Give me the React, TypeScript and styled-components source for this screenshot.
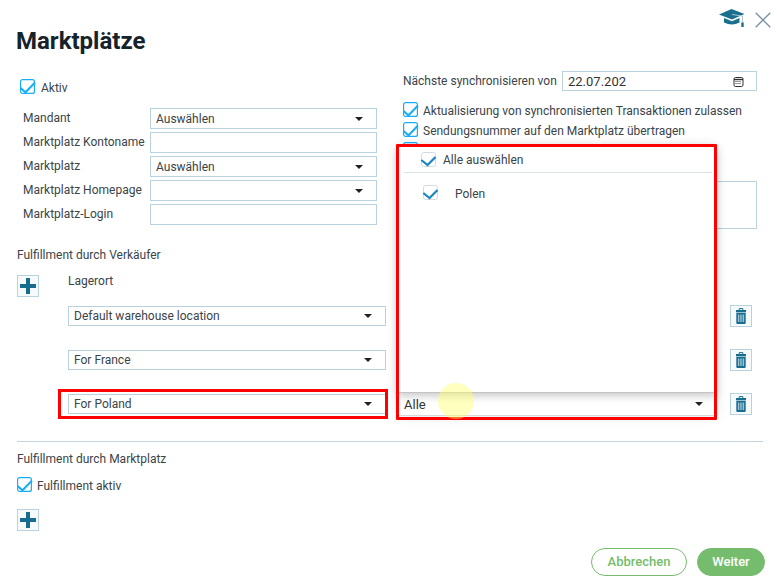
import React from 'react';
import styled, { createGlobalStyle } from 'styled-components';

const Global = createGlobalStyle`
  html, body { margin: 0; padding: 0; background: #fff; }
  * { box-sizing: border-box; }
  body { font-family: Roboto, "Liberation Sans", sans-serif; font-size: 12px; color: #3a4449; }
`;

const Page = styled.div`
  position: relative;
  width: 777px;
  height: 586px;
  overflow: hidden;
  background: #fff;
`;
const TopBar = styled.div`
  height: 28px;
  padding: 9px 6px 0 0;
  display: flex;
  justify-content: flex-end;
  gap: 10px;
`;
const Title = styled.h1`
  margin: 0 0 16px 16px;
  height: 27px;
  font-size: 24px;
  line-height: 27px;
  font-weight: 700;
  color: #16232a;
`;
const Columns = styled.div`
  display: grid;
  grid-template-columns: 403px 354px;
  height: 177px;
`;
const LeftCol = styled.div`
  padding: 8px 0 0 20px;
`;
const RightCol = styled.div`
  display: flex;
  flex-direction: column;
`;
const BoxLabel = styled.label<{ $gap?: number }>`
  display: flex;
  align-items: center;
  gap: ${p => p.$gap ?? 5}px;
  height: 15px;
  line-height: 15px;
  white-space: nowrap;
`;
const BoxText = styled.span<{ $shift?: number }>`
  padding-top: ${p => p.$shift ?? 4}px;
`;
const BoxSvg = styled.svg`
  display: block;
  flex: none;
  overflow: visible;
`;
const FormList = styled.div`
  margin-top: 14px;
  padding-left: 3px;
  display: flex;
  flex-direction: column;
  gap: 3px;
`;
const FormRow = styled.div`
  display: flex;
  align-items: flex-start;
  height: 21px;
`;
const FormLabel = styled.div`
  width: 127px;
  padding-top: 2px;
  line-height: 16px;
  white-space: nowrap;
`;
const Field = styled.div<{ $w?: number; $h?: number }>`
  position: relative;
  display: flex;
  align-items: center;
  width: ${p => (p.$w ? `${p.$w}px` : '100%')};
  height: ${p => p.$h ?? 21}px;
  padding: 0 5px;
  border: 1px solid #b9d2de;
  background: #fff;
  color: #3a4449;
  white-space: nowrap;
`;
const Caret = styled.span`
  position: absolute;
  right: 13px;
  top: 50%;
  margin-top: -2px;
  width: 0;
  height: 0;
  border-left: 4px solid transparent;
  border-right: 4px solid transparent;
  border-top: 4px solid #222;
`;
const DateRow = styled.div`
  display: flex;
  align-items: center;
  height: 20px;
  margin-bottom: 11px;
`;
const DateLabel = styled.span`
  width: 159px;
  white-space: nowrap;
`;
const DateText = styled.span`
  font-size: 13px;
  color: #333;
`;
const CalIcon = styled.svg`
  position: absolute;
  right: 12px;
  top: 4px;
`;
const CheckStack = styled.div`
  display: flex;
  flex-direction: column;
  gap: 5px;
`;
const NoteBox = styled.div`
  margin-top: 24px;
  height: 48px;
  border: 1px solid #b9d2de;
`;
const Section = styled.section`
  padding-left: 17px;
`;
const SectionTitle = styled.div`
  height: 14px;
  line-height: 14px;
  white-space: nowrap;
`;
const SquareButton = styled.button`
  display: flex;
  align-items: center;
  justify-content: center;
  width: 22px;
  height: 22px;
  padding: 0;
  border: 1px solid #b9d2de;
  background: #f7fafb;
`;
const HeadRow = styled.div`
  display: flex;
  margin-top: 13px;
  margin-bottom: 8px;
`;
const LagerLabel = styled.div`
  margin-left: 29px;
  line-height: 13px;
`;
const WarehouseList = styled.div`
  display: flex;
  flex-direction: column;
  gap: 22px;
  margin-left: 51px;
`;
const WarehouseRow = styled.div`
  display: flex;
  align-items: center;
  height: 22px;
`;
const SelectWrap = styled.div<{ $marked?: boolean }>`
  position: relative;
  width: 318px;
  ${p => p.$marked && `
    &::after {
      content: '';
      position: absolute;
      left: -10px;
      right: -2px;
      top: -5px;
      bottom: -5px;
      border: 3px solid #f00;
      pointer-events: none;
    }
  `}
`;
const RightSelect = styled.div`
  width: 312px;
  margin: 0 15px 0 17px;
`;
const Divider = styled.hr`
  margin: 26px 14px 0 17px;
  border: 0;
  border-top: 1px solid #c5d5dc;
`;
const MarketSection = styled(Section)`
  padding-top: 10px;
`;
const MarketCheck = styled.div`
  margin: 11px 0 17px;
`;
const Footer = styled.div`
  display: flex;
  justify-content: flex-end;
  gap: 10px;
  margin-top: 17px;
  padding-right: 12px;
`;
const Pill = styled.button<{ $solid?: boolean }>`
  width: ${p => (p.$solid ? 68 : 96)}px;
  height: 28px;
  padding: 0 0 1px;
  border-radius: 14px;
  border: 1px solid #75bd6d;
  background: ${p => (p.$solid ? '#75bd6d' : '#fff')};
  color: ${p => (p.$solid ? '#fff' : '#75bd6d')};
  font: 500 13px Roboto, sans-serif;
`;
const Overlay = styled.div`
  position: absolute;
  left: 398px;
  top: 146px;
  width: 318px;
  height: 270px;
  display: flex;
  flex-direction: column;
  background: #fff;
  box-shadow: 0 0 12px rgba(0, 0, 0, .12);
  &::after {
    content: '';
    position: absolute;
    left: -2px;
    right: -1px;
    top: -2px;
    bottom: -4px;
    border: 3px solid #f00;
    border-radius: 1px;
    pointer-events: none;
  }
`;
const Panel = styled.div`
  flex: 1;
  padding: 6px 4px 0 6px;
  border-bottom: 1px solid #c4c4c4;
  box-shadow: 0 3px 8px rgba(0, 0, 0, .22);
  position: relative;
  background: #fff;
`;
const AllRow = styled.div`
  height: 21px;
  padding-left: 17px;
  border-bottom: 1px solid #d9e2e6;
  display: flex;
  align-items: flex-start;
`;
const OptionRow = styled.div`
  margin-top: 12px;
  padding-left: 19px;
`;
const Bar = styled.div`
  position: relative;
  height: 23px;
  display: flex;
  align-items: center;
  padding-left: 6px;
  border-bottom: 1px solid #d8d8d8;
  font-size: 13px;
  color: #333;
`;
const Glow = styled.div`
  position: absolute;
  left: 438px;
  top: 383px;
  width: 36px;
  height: 36px;
  border-radius: 50%;
  background: rgba(255, 255, 110, .45);
`;

const OuterCheck = () => (
  <BoxSvg width="15" height="15" viewBox="0 0 15 15">
    <rect x=".6" y=".6" width="13.8" height="13.8" rx="2" fill="#fff" stroke="#18aef5" strokeWidth="1.2" />
    <path d="M.5 9 L5.5 13.3 L15 3.5" fill="none" stroke="#18aef5" strokeWidth="2" />
  </BoxSvg>
);
const InnerCheck = () => (
  <BoxSvg width="15" height="15" viewBox="0 0 15 15">
    <rect x=".5" y=".5" width="14" height="14" rx="2" fill="#fff" stroke="#cfdde3" />
    <path d="M0.3 8 L6.5 13 L14.5 5" fill="none" stroke="#1b86c1" strokeWidth="2.2" />
  </BoxSvg>
);
const PlusIcon = () => (
  <svg width="16" height="16" viewBox="0 0 16 16">
    <path d="M6 0 H10 V6 H16 V10 H10 V16 H6 V10 H0 V6 H6 Z" fill="#176d8f" />
  </svg>
);
const TrashIcon = () => (
  <svg width="10" height="16" viewBox="0 0 10 16">
    <path d="M3.2 2 V.6 H6.8 V2" fill="none" stroke="#176d8f" />
    <path d="M0 2 H10 V4.2 H0 Z" fill="#176d8f" />
    <path d="M.3 4.8 H9.7 V15 Q9.7 16 8.7 16 H1.3 Q.3 16 .3 15 Z" fill="#176d8f" />
    <path d="M2.4 6.5 V14 M4.2 6.5 V14 M5.9 6.5 V14 M7.6 6.5 V14" stroke="#bcd8e3" strokeWidth=".9" />
  </svg>
);
const CapIcon = () => (
  <svg width="26" height="18" viewBox="0 0 26 18">
    <path d="M0 5.5 L12.5 0 L25.5 5 L13 10.5 Z" fill="#1a6e8e" />
    <path d="M5 9 L13 12.2 L20.5 9 V13.5 Q13 17.5 5 13.5 Z" fill="#1a6e8e" />
    <path d="M13 5.5 L23.5 7 V14" fill="none" stroke="#a9c8d6" strokeWidth="1" />
    <path d="M22.3 13.5 H24.7 V18 H22.3 Z" fill="#1a6e8e" />
  </svg>
);
const CloseIcon = () => (
  <svg width="16" height="16" viewBox="0 0 16 16" style={{ marginTop: 3 }}>
    <path d="M.7 .7 L15.3 15.3 M15.3 .7 L.7 15.3" stroke="#7b8fa8" strokeWidth="1.3" fill="none" />
  </svg>
);

const Select = ({ value, w, h }: { value?: string; w?: number; h?: number }) => (
  <Field $w={w} $h={h}>
    {value}
    <Caret />
  </Field>
);

const formRows = [
  { label: 'Mandant', value: 'Auswählen', select: true },
  { label: 'Marktplatz Kontoname' },
  { label: 'Marktplatz', value: 'Auswählen', select: true },
  { label: 'Marktplatz Homepage', select: true },
  { label: 'Marktplatz-Login' },
];
const warehouses = ['Default warehouse location', 'For France', 'For Poland'];

export default function App() {
  return (
    <Page>
      <Global />
      <TopBar>
        <CapIcon />
        <CloseIcon />
      </TopBar>
      <Title>Marktplätze</Title>
      <Columns>
        <LeftCol>
          <BoxLabel $gap={6}><OuterCheck /><BoxText>Aktiv</BoxText></BoxLabel>
          <FormList>
            {formRows.map(r => (
              <FormRow key={r.label}>
                <FormLabel>{r.label}</FormLabel>
                {r.select ? <Select value={r.value} w={227} /> : <Field $w={227} />}
              </FormRow>
            ))}
          </FormList>
        </LeftCol>
        <RightCol>
          <DateRow>
            <DateLabel>Nächste synchronisieren von</DateLabel>
            <Field $w={195} $h={20}>
              <DateText>22.07.202</DateText>
              <CalIcon width="11" height="11" viewBox="0 0 11 11">
                <rect x="1" y="1.5" width="9" height="9" rx="1.5" fill="none" stroke="#333" />
                <path d="M1 3.5 H10" stroke="#333" strokeWidth="1.4" />
                <path d="M2.5 5.5 H8.5 M2.5 7.5 H8.5" stroke="#333" strokeDasharray="1 1" />
              </CalIcon>
            </Field>
          </DateRow>
          <CheckStack>
            <BoxLabel><OuterCheck /><BoxText>Aktualisierung von synchronisierten Transaktionen zulassen</BoxText></BoxLabel>
            <BoxLabel><OuterCheck /><BoxText>Sendungsnummer auf den Marktplatz übertragen</BoxText></BoxLabel>
            <BoxLabel><OuterCheck /></BoxLabel>
          </CheckStack>
          <NoteBox />
        </RightCol>
      </Columns>
      <Section>
        <SectionTitle>Fulfillment durch Verkäufer</SectionTitle>
        <HeadRow>
          <SquareButton><PlusIcon /></SquareButton>
          <LagerLabel>Lagerort</LagerLabel>
        </HeadRow>
        <WarehouseList>
          {warehouses.map((w, i) => (
            <WarehouseRow key={w}>
              <SelectWrap $marked={i === 2}><Select value={w} h={20} /></SelectWrap>
              <RightSelect><Select h={20} /></RightSelect>
              <SquareButton><TrashIcon /></SquareButton>
            </WarehouseRow>
          ))}
        </WarehouseList>
      </Section>
      <Divider />
      <MarketSection>
        <SectionTitle>Fulfillment durch Marktplatz</SectionTitle>
        <MarketCheck><BoxLabel><OuterCheck /><BoxText>Fulfillment aktiv</BoxText></BoxLabel></MarketCheck>
        <SquareButton><PlusIcon /></SquareButton>
      </MarketSection>
      <Footer>
        <Pill>Abbrechen</Pill>
        <Pill $solid>Weiter</Pill>
      </Footer>
      <Overlay>
        <Panel>
          <AllRow><BoxLabel $gap={7}><InnerCheck /><BoxText $shift={2}>Alle auswählen</BoxText></BoxLabel></AllRow>
          <OptionRow><BoxLabel $gap={17}><InnerCheck /><BoxText>Polen</BoxText></BoxLabel></OptionRow>
        </Panel>
        <Bar>Alle<Caret /></Bar>
      </Overlay>
      <Glow />
    </Page>
  );
}
